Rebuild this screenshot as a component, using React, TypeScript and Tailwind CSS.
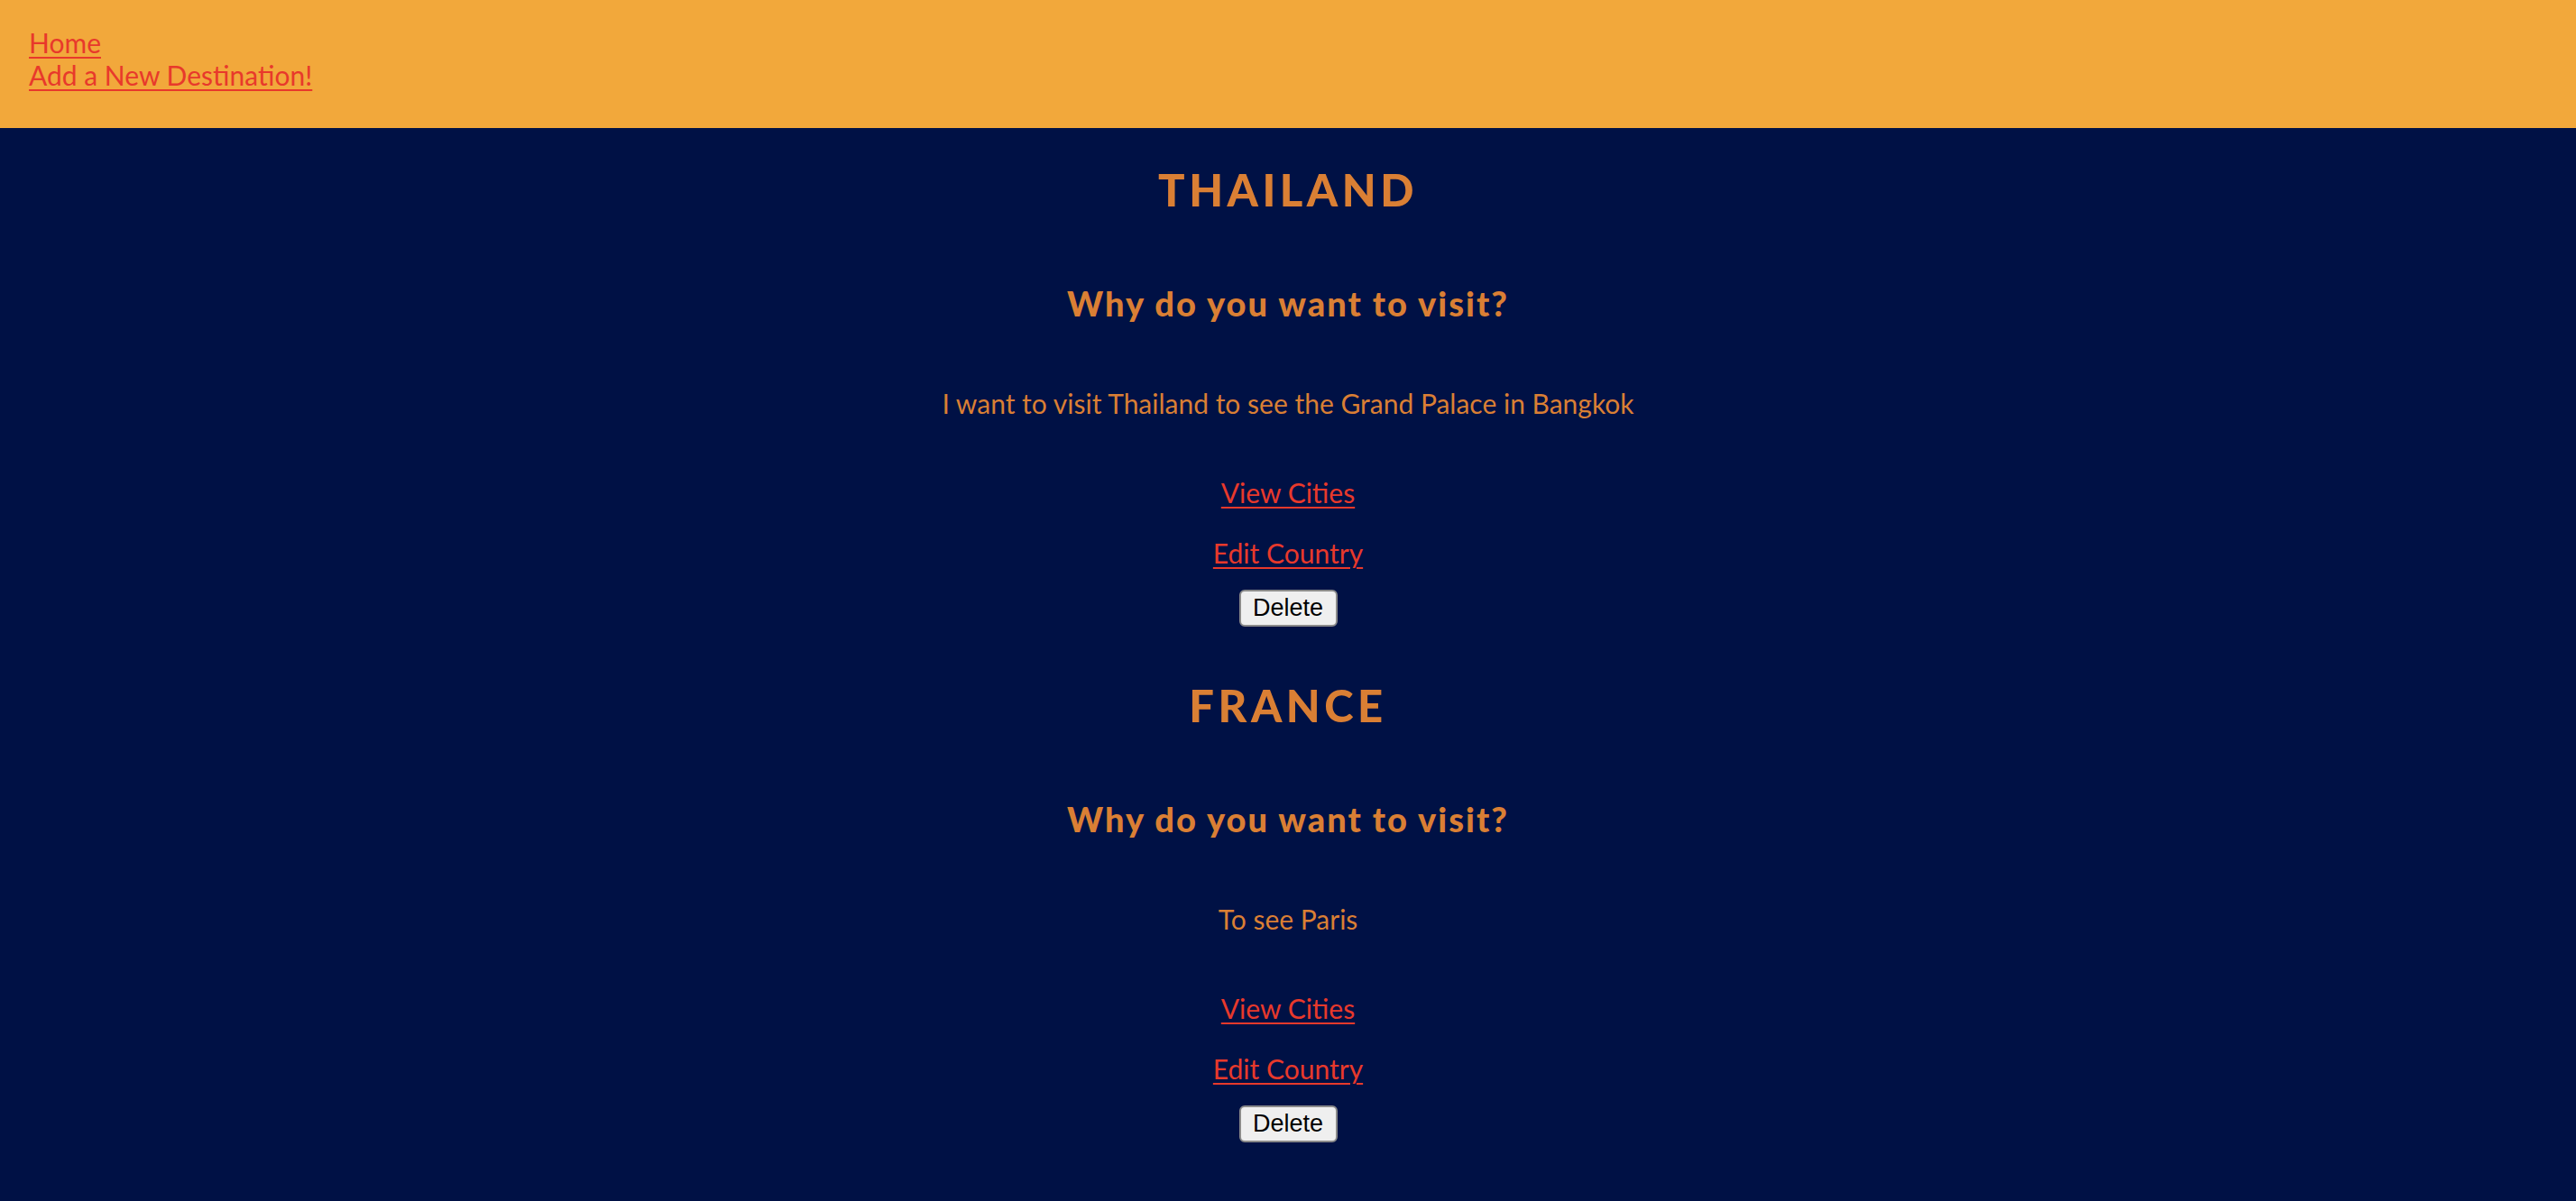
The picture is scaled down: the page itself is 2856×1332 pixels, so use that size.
import React from "react";

interface Country {
  id: number;
  name: string;
  reason: string;
}

const countries: Country[] = [
  {
    id: 1,
    name: "Thailand",
    reason: "I want to visit Thailand to see the Grand Palace in Bangkok",
  },
  { id: 2, name: "France", reason: "To see Paris" },
];

const font = { fontFamily: '"Lato", "Open Sans", sans-serif' };

const Nav: React.FC = () => {
  return (
    <nav className="h-[142px] bg-[#f2a83b] pl-[32px] pt-[29px]">
      <div className="flex flex-col items-start text-[30px] leading-[36px]">
        <a href="#" className="text-[#e8392b] underline decoration-2 underline-offset-4">
          Home
        </a>
        <a href="#" className="text-[#e8392b] underline decoration-2 underline-offset-4">
          Add a New Destination!
        </a>
      </div>
    </nav>
  );
};

const CountryCard: React.FC<{ country: Country; first: boolean }> = ({ country, first }) => {
  return (
    <section className={`flex flex-col items-center text-center ${first ? "pt-[40px]" : "pt-[59px]"}`}>
      <h2 className="text-[49px] leading-[56px] font-black uppercase tracking-[4.5px] text-[#da7f34]">
        {country.name}
      </h2>

      <h3 className="mt-[76px] text-[38px] leading-[44px] font-black tracking-[2px] text-[#da7f34]">
        Why do you want to visit?
      </h3>

      <p className="mt-[71px] text-[30px] leading-[36px] text-[#da7f34]">{country.reason}</p>

      <a
        href="#"
        className="mt-[63px] text-[30px] leading-[36px] text-[#e8392b] underline decoration-2 underline-offset-4"
      >
        View Cities
      </a>
      <a
        href="#"
        className="mt-[31px] text-[30px] leading-[36px] text-[#e8392b] underline decoration-2 underline-offset-4"
      >
        Edit Country
      </a>

      {/* form button */}
      <button
        className="mt-[23px] h-[41px] w-[109px] rounded-[6px] border-2 border-[#8a8a8a] bg-[#efefef] text-[27px] leading-none text-black"
        style={{ fontFamily: '"Liberation Sans", Arial, sans-serif' }}
      >
        Delete
      </button>
    </section>
  );
};

const App: React.FC = () => {
  return (
    <div className="min-h-screen bg-[#001145]" style={font}>
      <Nav />
      <main>
        {countries.map((c, i) => (
          <CountryCard key={c.id} country={c} first={i === 0} />
        ))}
      </main>
    </div>
  );
};

export default App;
